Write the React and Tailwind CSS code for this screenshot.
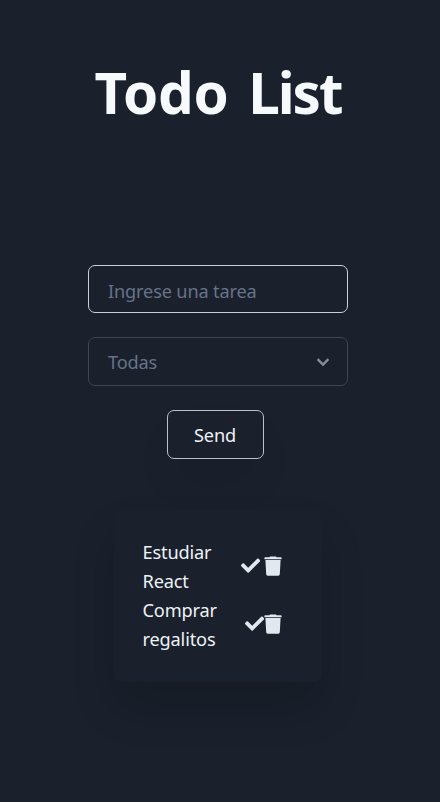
import { FaCheck } from "react-icons/fa";

const tasks = [
  { name: "Estudiar React", check: "mr-[4px]" },
  { name: "Comprar regalitos", check: "" },
];

function TrashIcon() {
  return (
    <svg viewBox="0 0 18 20" className="h-[20px] w-[18px] fill-current">
      <path d="M6 .6h6l.6.6h4.300q.7 0 .7.7v1q0 .3-.4.3H.8q-.4 0-.4-.3v-1q0-.7.7-.7h4.300zM1.400 4h15.200l-.8 14.300q-.1 1.400-1.500 1.400H3.700q-1.400 0-1.500-1.400z" />
    </svg>
  );
}

export default function App() {
  return (
    <main className="flex h-[802px] w-[440px] flex-col items-center overflow-hidden bg-[#1a202c] pr-[4px] font-['Noto_Sans',sans-serif] text-[18.2px] leading-[29px] tracking-[-0.17px] text-[#edf2f7]">
      <h1 className="mt-[57px] h-[72px] text-[56.5px] leading-[72px] font-bold tracking-[-0.2px] whitespace-nowrap text-[#f7fafc] [word-spacing:5px]">
        Todo <span className="tracking-[-2px]">List</span>
      </h1>
      <form className="mt-[135.5px] flex w-[260px] flex-col items-center gap-[24px]">
        <input
          placeholder="Ingrese una tarea"
          className="h-[48.5px] w-full rounded-[7px] border border-[#cbd0d8] bg-transparent px-[19px] pt-[4px] placeholder:text-[#667389]"
        />
        <div className="flex h-[48.5px] w-full items-center justify-between rounded-[7px] border border-[#40464f] px-[19px] text-[#667389]">
          <span className="pt-[2px]">Todas</span>
          <svg
            viewBox="0 0 24 24"
            className="mt-[2px] -mr-[7px] h-[24px] w-[24px] fill-[#868c98] stroke-[#868c98] stroke-[0.5]"
          >
            <path d="M16.59 8.59L12 13.17 7.41 8.59 6 10l6 6 6-6z" />
          </svg>
        </div>
        <button
          type="button"
          className="mr-[6px] h-[49px] w-[97px] rounded-[7px] border border-[#bcc0c8] pt-[2px] shadow-[0_25px_50px_-12px_rgba(0,0,0,0.12)]"
        >
          Send
        </button>
      </form>
      <ul className="mt-[50px] h-[173px] w-[208px] rounded-[7px] bg-[#1a202c] px-[28.5px] pt-[29px] shadow-[0_26px_46px_-4px_rgba(0,0,0,0.17)]">
        {tasks.map((task) => (
          <li key={task.name} className="flex h-[58px] items-center">
            <span className="w-[76px]">{task.name}</span>
            <span className="ml-auto flex items-center pr-[11.5px] pb-[1.5px] text-[19.2px] text-[#e2e8f0]">
              <FaCheck className={task.check} />
              <TrashIcon />
            </span>
          </li>
        ))}
      </ul>
    </main>
  );
}
